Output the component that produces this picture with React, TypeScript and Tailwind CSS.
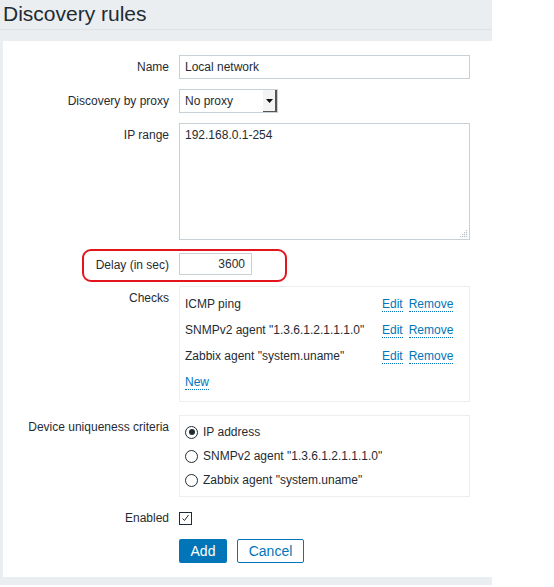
import type { ReactNode } from 'react';

const checks = [
  'ICMP ping',
  'SNMPv2 agent "1.3.6.1.2.1.1.1.0"',
  'Zabbix agent "system.uname"',
];

const criteria = [
  { label: 'IP address', selected: true },
  { label: 'SNMPv2 agent "1.3.6.1.2.1.1.1.0"', selected: false },
  { label: 'Zabbix agent "system.uname"', selected: false },
];

function FormRow({ label, className, children }: { label: string; className?: string; children: ReactNode }) {
  return (
    <div className={`flex items-start gap-[10px] ${className ?? ''}`}>
      <div className="w-[166px] shrink-0 text-right leading-[24px]">{label}</div>
      {children}
    </div>
  );
}

function Link({ children }: { children: ReactNode }) {
  return (
    <span className="text-[#0275b8] border-b border-dotted border-[#0275b8] leading-[14px] cursor-pointer">
      {children}
    </span>
  );
}

function Radio({ selected }: { selected: boolean }) {
  return (
    <span className="w-[13px] h-[13px] rounded-full border-[1.5px] border-[#1f2c33] flex items-center justify-center shrink-0">
      {selected && <span className="w-[6px] h-[6px] rounded-full bg-[#1f2c33]" />}
    </span>
  );
}

export default function App() {
  return (
    <div
      className="w-[492px] bg-[#ebeef0] text-[12px] text-[#1f2c33] pb-[8px]"
      style={{ fontFamily: '"Liberation Sans", Arial, sans-serif' }}
    >
      <header className="h-[30px] px-[3px] pb-[3px] border-b border-[#dde2e5] flex items-center">
        <h1 className="text-[21px] leading-none">Discovery rules</h1>
      </header>

      <div className="mt-[11px] ml-[3px] bg-white pt-[14px] pb-[14px]">
        <FormRow label="Name">
          <div className="w-[291px] h-[24px] border border-[#c8d1d6] px-[5px] flex items-center">
            Local network
          </div>
        </FormRow>

        <FormRow label="Discovery by proxy" className="mt-[10px]">
          <div className="w-[99px] h-[24px] border border-[#c8d1d6] pl-[5px] flex items-center justify-between">
            <span>No proxy</span>
            <span className="w-[14px] h-full bg-[#f4f4f4] border-r-2 border-b border-[#555] flex items-center justify-center">
              <svg width="7" height="4" viewBox="0 0 7 4">
                <path d="M0 0h7L3.5 4z" fill="#111" />
              </svg>
            </span>
          </div>
        </FormRow>

        <FormRow label="IP range" className="mt-[10px]">
          <div className="relative">
            <textarea
              readOnly
              defaultValue="192.168.0.1-254"
              className="block w-[291px] h-[117px] border border-[#c8d1d6] px-[5px] py-[4px] leading-[14px] outline-none resize-none"
            />
            {/* resize grip */}
            <svg className="absolute right-[2px] bottom-[2px]" width="10" height="10" viewBox="0 0 10 10">
              {[
                [8, 2], [6, 4], [8, 4], [4, 6], [6, 6], [8, 6], [2, 8], [4, 8], [6, 8], [8, 8],
              ].map(([x, y]) => (
                <rect key={`${x}-${y}`} x={x} y={y} width="1.2" height="1.2" fill="#b8c2c8" />
              ))}
            </svg>
          </div>
        </FormRow>

        <div className="relative mt-[13px]">
          <FormRow label="Delay (in sec)">
            <div className="w-[73px] h-[22px] border border-[#c8d1d6] pr-[6px] flex items-center justify-end">
              3600
            </div>
          </FormRow>
          <div className="absolute left-[79px] top-[-4px] w-[205px] h-[33px] rounded-[9px] border-2 border-[#e3151c]" />
        </div>

        <FormRow label="Checks" className="mt-[9px]">
          <div className="w-[291px] border border-[#eceff1] px-[5px] pt-[4px] pb-[6px]">
            {checks.map((c) => (
              <div key={c} className="h-[26px] flex items-center">
                <span className="w-[197px] shrink-0">{c}</span>
                <div className="flex gap-[6px]">
                  <Link>Edit</Link>
                  <Link>Remove</Link>
                </div>
              </div>
            ))}
            <div className="h-[26px] flex items-center">
              <Link>New</Link>
            </div>
          </div>
        </FormRow>

        <FormRow label="Device uniqueness criteria" className="mt-[13px]">
          <div className="w-[291px] border border-[#eceff1] px-[5px] py-[4px]">
            {criteria.map((c) => (
              <div key={c.label} className="h-[24px] flex items-center gap-[5px]">
                <Radio selected={c.selected} />
                <span>{c.label}</span>
              </div>
            ))}
          </div>
        </FormRow>

        <FormRow label="Enabled" className="mt-[9px]">
          <div className="h-[24px] flex items-center">
            <span className="w-[13px] h-[13px] border border-[#1f2c33] flex items-center justify-center">
              <svg width="9" height="8" viewBox="0 0 9 8">
                <path d="M1.5 4.5l2 2L7.5 1" fill="none" stroke="#1f2c33" strokeWidth="1" />
              </svg>
            </span>
          </div>
        </FormRow>

        <div className="flex gap-[10px] ml-[176px] mt-[9px]">
          <button className="w-[48px] h-[24px] bg-[#0275b8] text-white text-[14px] rounded-[2px]">Add</button>
          <button className="w-[67px] h-[24px] border border-[#0275b8] text-[#0275b8] text-[14px] rounded-[2px] bg-white">
            Cancel
          </button>
        </div>
      </div>
    </div>
  );
}
